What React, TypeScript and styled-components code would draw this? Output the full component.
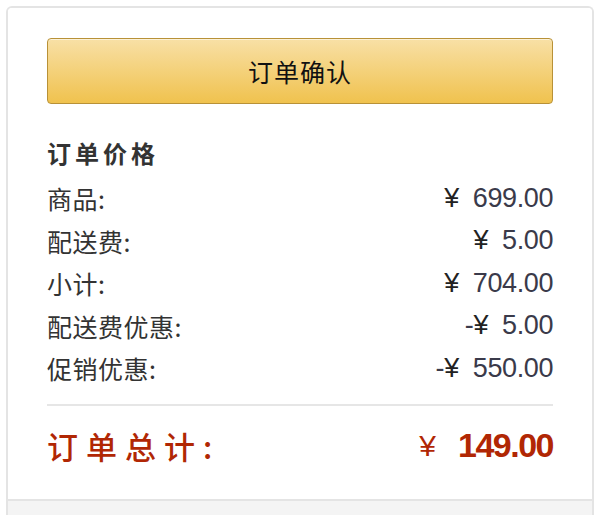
import React from 'react';
import styled, { createGlobalStyle } from 'styled-components';

const GlobalStyle = createGlobalStyle`
  html, body {
    margin: 0;
    padding: 0;
    background: #ffffff;
  }
  body {
    font-family: "Noto Sans CJK SC", "Liberation Sans", sans-serif;
    color: #333333;
  }
`;

const Card = styled.div`
  margin: 6px 6px 0;
  border: 2px solid #e4e4e4;
  border-bottom: none;
  border-radius: 6px 6px 0 0;
  overflow: hidden;
`;

const Body = styled.div`
  padding: 30px 39px 23px;
  background: #ffffff;
`;

const ConfirmButton = styled.button`
  display: block;
  width: 100%;
  height: 66px;
  border: 1px solid #b89137;
  border-radius: 4px;
  background: linear-gradient(to bottom, #f8e0a6, #f0c24e);
  box-shadow: inset 0 1px 0 rgba(255, 255, 255, 0.55);
  font-family: "Noto Sans CJK SC", sans-serif;
  font-size: 25px;
  letter-spacing: 1px;
  color: #111111;
  cursor: pointer;
`;

const Title = styled.div`
  margin: 27px 0 2px;
  line-height: 44px;
  font-size: 24px;
  font-weight: bold;
  letter-spacing: 4px;
  color: #333333;
`;

const Row = styled.div`
  display: flex;
  justify-content: space-between;
  align-items: center;
  height: 42.5px;
`;

const Label = styled.span`
  font-size: 25px;
  letter-spacing: 0.5px;
  color: #333333;
`;

const Amount = styled.span`
  font-family: "Liberation Sans", Arial, sans-serif;
  font-size: 27px;
  letter-spacing: -0.4px;
  color: #3a3a4a;
  white-space: pre;
`;

const Yen = styled.span`
  margin-right: 14px;
  color: #222222;
`;

const Divider = styled.hr`
  margin: 14px 0 0;
  border: none;
  height: 2px;
  background: #e6e6e6;
`;

const TotalRow = styled.div`
  display: flex;
  justify-content: space-between;
  align-items: center;
  height: 60px;
  margin-top: 10px;
  color: #b12704;
`;

const TotalLabel = styled.span`
  font-size: 31px;
  font-weight: 500;
  letter-spacing: 8px;
`;

const TotalValue = styled.span`
  display: flex;
  align-items: center;
  gap: 22px;
  font-family: "Liberation Sans", Arial, sans-serif;
`;

const TotalYen = styled.span`
  font-size: 30px;
`;

const TotalNumber = styled.span`
  font-size: 34px;
  font-weight: bold;
  letter-spacing: -1.5px;
`;

const Footer = styled.div`
  height: 30px;
  border-top: 2px solid #e4e4e4;
  background: #f4f4f4;
`;

const lines = [
  { label: '商品:', sign: '', value: '699.00' },
  { label: '配送费:', sign: '', value: '5.00' },
  { label: '小计:', sign: '', value: '704.00' },
  { label: '配送费优惠:', sign: '-', value: '5.00' },
  { label: '促销优惠:', sign: '-', value: '550.00' },
];

export default function App() {
  return (
    <>
      <GlobalStyle />
      <Card>
        <Body>
          <ConfirmButton>订单确认</ConfirmButton>
          <Title>订单价格</Title>
          {lines.map(line => (
            <Row key={line.label}>
              <Label>{line.label}</Label>
              <Amount>
                {line.sign}
                <Yen>¥</Yen>{line.value}
              </Amount>
            </Row>
          ))}
          <Divider />
          <TotalRow>
            <TotalLabel>订单总计:</TotalLabel>
            <TotalValue>
              <TotalYen>¥</TotalYen>
              <TotalNumber>149.00</TotalNumber>
            </TotalValue>
          </TotalRow>
        </Body>
        <Footer />
      </Card>
    </>
  );
}
